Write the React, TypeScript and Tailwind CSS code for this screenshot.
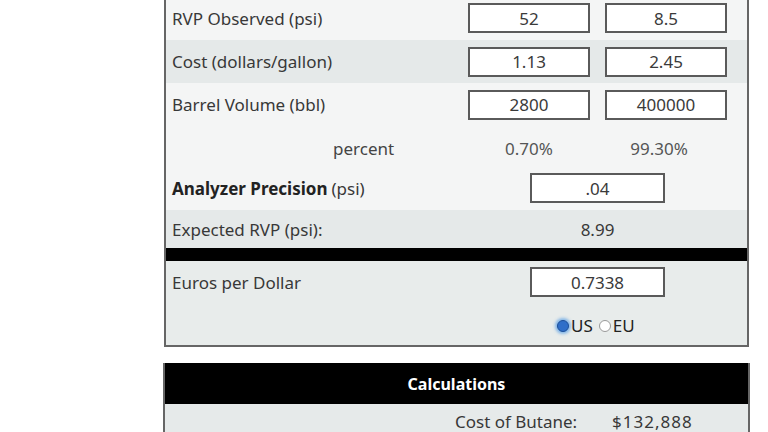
import React from "react";

function Box({ value, w = "w-[122px]" }: { value: string; w?: string }) {
  return (
    <div
      className={`${w} h-[30px] bg-white border-2 border-[#5a5a5a] flex items-center justify-center text-[17px] text-[#3a3a3a]`}
    >
      {value}
    </div>
  );
}

export default function App() {
  return (
    <div className="w-[768px] h-[432px] bg-white overflow-hidden text-[17px] text-[#383838] font-['Noto_Sans',sans-serif] leading-none">
      <div className="ml-[164px] w-[585px] border-x-2 border-b-2 border-[#666]">
        {/* Row 1 */}
        <div className="h-[40px] bg-[#f4f5f5] flex items-start pt-[3px]">
          <div className="w-[302px] pl-[6px] h-[30px] flex items-center">RVP Observed (psi)</div>
          <Box value="52" />
          <div className="w-[15px]" />
          <Box value="8.5" />
        </div>
        {/* Row 2 */}
        <div className="h-[43px] bg-[#e5e9e9] flex items-center">
          <div className="w-[302px] pl-[6px]">Cost (dollars/gallon)</div>
          <Box value="1.13" />
          <div className="w-[15px]" />
          <Box value="2.45" />
        </div>
        {/* Row 3 */}
        <div className="h-[43px] bg-[#f4f5f5] flex items-center">
          <div className="w-[302px] pl-[6px]">Barrel Volume (bbl)</div>
          <Box value="2800" />
          <div className="w-[15px]" />
          <Box value="400000" />
        </div>
        {/* percent */}
        <div className="h-[44px] bg-[#f4f5f5] flex items-center text-[#444]">
          <div className="w-[302px] pl-[167px]">percent</div>
          <div className="w-[122px] text-center text-[#555]">0.70%</div>
          <div className="w-[8px]" />
          <div className="w-[122px] text-center text-[#555]">99.30%</div>
        </div>
        {/* Analyzer */}
        <div className="h-[40px] bg-[#f4f5f5] flex items-start pt-[3px]">
          <div className="w-[364px] pl-[6px] h-[30px] flex items-center">
            <span className="font-bold text-[#222]">Analyzer Precision</span>
            <span className="ml-[4px]">(psi)</span>
          </div>
          <Box value=".04" w="w-[135px]" />
        </div>
        {/* Expected */}
        <div className="h-[38px] bg-[#e5e9e9] flex items-center">
          <div className="w-[364px] pl-[6px]">Expected RVP (psi):</div>
          <div className="w-[135px] text-center">8.99</div>
        </div>
        <div className="h-[13px] bg-black" />
        {/* Euros */}
        <div className="h-[84px] bg-[#e8eceb] pt-[6px]">
          <div className="flex items-center">
            <div className="w-[364px] pl-[6px]">Euros per Dollar</div>
            <Box value="0.7338" w="w-[135px]" />
          </div>
          <div className="flex mt-[20px]">
            <div className="w-[391px]" />
            <div className="flex items-center text-[17px] text-[#222]">
              <span className="w-[12px] h-[12px] rounded-full bg-[#2f6fc9] border border-[#1d4f99] shadow-[0_0_3px_2px_rgba(90,160,230,0.7)]" />
              <span className="ml-[2px]">US</span>
              <span className="ml-[6px] w-[12px] h-[12px] rounded-full bg-white border border-[#999]" />
              <span className="ml-[2px]">EU</span>
            </div>
          </div>
        </div>
      </div>
      <div className="ml-[163px] w-[587px] mt-[16px] border-x-2 border-[#666]">
        <div className="h-[41px] bg-black text-white font-bold text-[16px] flex items-center justify-center">
          Calculations
        </div>
        <div className="h-[29px] bg-[#e6eaea] flex items-end pb-[3px]">
          <div className="w-[447px] pl-[290px]">Cost of Butane:</div>
          <div className="tracking-[1px]">$132,888</div>
        </div>
      </div>
    </div>
  );
}
